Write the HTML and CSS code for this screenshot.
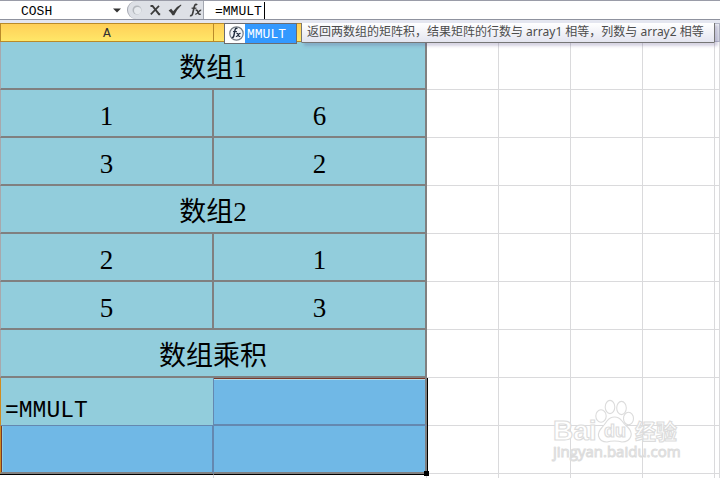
FILE: index.html
```html
<!DOCTYPE html>
<html lang="zh-CN">
<head>
<meta charset="utf-8">
<title>MMULT</title>
<link rel="stylesheet" href="styles.css">
</head>
<body>
<div class="formula-bar">
  <input class="name-box" type="text" value="COSH" aria-label="名称框">
  <button class="drop" type="button" aria-label="名称列表">
    <svg width="8" height="5" viewBox="0 0 8 5"><path d="M0 0.5h8L4 4.5z" fill="#333"/></svg>
  </button>
  <div class="tools">
    <svg class="knob" width="10" height="10" viewBox="0 0 10 10"><circle cx="5" cy="5" r="4.5" fill="#b4b8be"/><circle cx="5.6" cy="5.6" r="3.6" fill="#e6e9ed"/></svg>
    <button type="button" aria-label="取消">
      <svg width="12" height="12" viewBox="0 0 12 12"><path d="M1.5 2h2L10 10.2H11.2" fill="none" stroke="#3c3c3c" stroke-width="1.9"/><path d="M10 1.8L1.8 10.4" fill="none" stroke="#3c3c3c" stroke-width="1.7"/></svg>
    </button>
    <button type="button" aria-label="输入">
      <svg width="14" height="12" viewBox="0 0 14 12"><path d="M0.6 6.4L3.2 4.8L5.2 7.2Q8.2 2.4 13 0.4L13.4 1.2Q8.8 5.4 6.2 11.2H4.4Q3 8.4 0.6 6.4z" fill="#3c3c3c"/></svg>
    </button>
    <button type="button" aria-label="插入函数">
      <svg width="13" height="14" viewBox="0 0 13 14" fill="none" stroke="#3c3c3c"><path d="M8.2 1.9Q6.2 0.2 5.3 3.6L3.7 10.4Q3 13.4 1 12.4" stroke-width="1.7"/><path d="M2.6 5.2H7.4" stroke-width="1.3"/><path d="M6.6 7.4Q8 6.6 8.7 8.4L9.5 10.4Q10.2 11.8 11.6 10.8" stroke-width="1.6"/><path d="M12.2 7.3Q11 7 9.3 9.2Q7.6 11.5 6.2 11" stroke-width="1.3"/></svg>
    </button>
  </div>
  <div class="formula">
    <input class="formula-input" type="text" value="=MMULT" aria-label="编辑栏">
    <span class="caret"></span>
  </div>
</div>
<main class="sheet">
  <table>
    <colgroup><col class="col-a"><col class="col-b"><col class="col-n"><col class="col-n"><col class="col-n"><col class="col-n"><col></colgroup>
    <thead>
      <tr><th class="on">A</th><th class="on"></th><th></th><th></th><th></th><th></th><th></th></tr>
    </thead>
    <tbody>
      <tr><td class="f" colspan="2">数组1</td><td></td><td></td><td></td><td></td><td></td></tr>
      <tr><td class="f">1</td><td class="f">6</td><td></td><td></td><td></td><td></td><td></td></tr>
      <tr><td class="f">3</td><td class="f">2</td><td></td><td></td><td></td><td></td><td></td></tr>
      <tr><td class="f" colspan="2">数组2</td><td></td><td></td><td></td><td></td><td></td></tr>
      <tr><td class="f">2</td><td class="f">1</td><td></td><td></td><td></td><td></td><td></td></tr>
      <tr><td class="f">5</td><td class="f">3</td><td></td><td></td><td></td><td></td><td></td></tr>
      <tr><td class="f" colspan="2">数组乘积</td><td></td><td></td><td></td><td></td><td></td></tr>
      <tr><td class="f active">=MMULT</td><td class="f sel sel-top sel-right"></td><td></td><td></td><td></td><td></td><td></td></tr>
      <tr><td class="f sel sel-left"></td><td class="f sel sel-right sel-end"><span class="handle"></span></td><td></td><td></td><td></td><td></td><td></td></tr>
      <tr class="after"><td></td><td></td><td></td><td></td><td></td><td></td><td></td></tr>
    </tbody>
  </table>
  <div class="suggest">
    <svg width="20" height="19" viewBox="0 0 20 19"><circle cx="11.5" cy="9.5" r="6.7" fill="#f1f4f8" stroke="#747b84" stroke-width="1.2"/><g fill="none" stroke="#1f2b3d"><path d="M12.4 4.6Q10.6 3.4 10 6.2L8.9 11.5Q8.4 14 7 13.2" stroke-width="1.4"/><path d="M8 7.6h4" stroke-width="1"/><path d="M11.4 9.4Q12.7 9 13.2 10.8Q13.8 12.9 15.2 12.2M15.6 9.4Q14.4 9 13.3 10.8Q12.2 12.8 10.9 12.4" stroke-width="1.1"/></g></svg>
    <span class="suggest-name">MMULT</span>
  </div>
  <div class="tip">返回两数组的矩阵积，结果矩阵的行数与 array1 相等，列数与 array2 相等</div>
  <svg class="mark" width="140" height="68" viewBox="0 0 140 68" fill="#fff" stroke="#dcdcdc" stroke-width="1.1">
    <text class="mark-name" x="2" y="42" font-size="28">Bai</text>
    <text class="mark-cjk" x="84" y="41" font-size="21">经验</text>
    <ellipse cx="50" cy="18" rx="5.2" ry="6.2"/><ellipse cx="59" cy="9" rx="4.8" ry="6.6"/><ellipse cx="70.5" cy="10" rx="4.8" ry="6.6"/><ellipse cx="77.5" cy="20.5" rx="5" ry="6.2"/>
    <path d="M63.5 19Q68 19 71 23Q73 26 77 29.5Q81 33.500 80 38Q78 44 71 44Q68 43 63.500 43Q59 43 56 44Q49 44 47.500 38Q47 33.500 51 29.5Q54 26 56 23Q59 19 63.5 19z"/>
    <text class="mark-name" x="53" y="39" font-size="18">du</text>
    <text class="mark-url" x="2" y="59" font-size="15">jingyan.baidu.com</text>
  </svg>
</main>
</body>
</html>
```
FILE: styles.css
```css
* { box-sizing: border-box; }

body {
  margin: 0;
  height: 100vh;
  display: flex;
  flex-direction: column;
  overflow: hidden;
  background: #fff;
  color: #000;
  font-family: "Liberation Serif", "Noto Sans CJK SC", serif;
}

input, button {
  border: 0;
  padding: 0;
  margin: 0;
  background: none;
  outline: 0;
}

.formula-bar {
  flex: none;
  display: flex;
  align-items: stretch;
  height: 20px;
  border-top: 1px solid #9a9ca8;
  border-bottom: 1px solid #8f929e;
}

.name-box {
  width: 113px;
  padding: 2px 0 0 21px;
  font: 13px "Liberation Mono", monospace;
}

.drop {
  width: 14px;
  display: flex;
  align-items: center;
}

.tools {
  width: 77px;
  display: flex;
  align-items: center;
  gap: 7px;
  padding-left: 4px;
  background: #dde0e6;
  border: solid #a3a7b0;
  border-width: 0 1px;
  border-radius: 10px 0 0 10px;
}

.tools button { display: flex; }

.formula {
  flex: 1;
  display: flex;
  align-items: center;
  padding-left: 11px;
}

.formula-input {
  width: 49px;
  height: 18px;
  padding-top: 2px;
  font: 13px "Liberation Mono", monospace;
}

.caret {
  width: 1px;
  height: 17px;
  background: #000;
}

.sheet {
  position: relative;
  flex: 1;
  min-height: 0;
  overflow: hidden;
  border-top: 3px solid #e4e6f0;
}

table {
  width: 100%;
  table-layout: fixed;
  border-collapse: separate;
  border-spacing: 0;
}

.col-a { width: 214px; }
.col-b { width: 213px; }
.col-n { width: 72px; }

th {
  height: 19px;
  padding: 3px 0 0;
  font: 13px/14px "Liberation Mono", monospace;
  color: #333;
  background: linear-gradient(#eef0f5, #d8dbe6);
  border: solid #b4b7c6;
  border-width: 1px 1px 1px 0;
}

th.on {
  background: linear-gradient(#ffcf58, #ffe768);
  border-color: #b98a2a;
}

th:first-child { border-left: 1px solid #b98a2a; }

td {
  height: 48px;
  padding: 6px 0 0;
  text-align: center;
  font-size: 27px;
  line-height: 40px;
  border: solid #dadadc;
  border-width: 0 1px 1px 0;
}

td.f {
  position: relative;
  background: #92cddc;
  border: solid #808080;
  border-width: 0 2px 2px 0;
}

td.f:first-child { border-left: 1px solid #a8a8ac; }

td.active {
  padding: 19px 0 0 4px;
  text-align: left;
  font: 23px/28px "Liberation Mono", monospace;
  border-right: 1px solid #6488b0;
  border-bottom: 1px solid #6488b0;
}

td.active:first-child,
td.sel-left:first-child { border-left-color: #d08c20; }

td.sel {
  padding: 0;
  background: #70b8e6;
  border-color: #6488b0;
}

td.sel-left { box-shadow: inset 1px 0 #7a3828, inset 2px 0 #92cddc; border-bottom-color: #808080; }
td.sel-top { box-shadow: inset 0 1px #7a3828, inset 0 2px #b6dce8; }
td.sel-right { border-right-color: #808080; }
td.sel-end { border-bottom-color: #808080; }

td.sel-right::after {
  content: "";
  position: absolute;
  top: 0;
  bottom: -2px;
  right: -3px;
  width: 1px;
  background: #000;
}

.handle {
  position: absolute;
  right: -4px;
  bottom: -4px;
  width: 5px;
  height: 5px;
  background: #000;
}

.after td { padding: 0; }

.after td:nth-child(-n+2) { border-top: 1px solid #000; }

.suggest {
  position: absolute;
  left: 224px;
  top: 0;
  display: flex;
  height: 21px;
  border: 1px solid #6c6c70;
  background: #fff;
}

.suggest-name {
  padding: 1px 10px 0 2px;
  font: 13px/19px "Liberation Mono", monospace;
  color: #fff;
  background: #3399ff;
}

.tip {
  position: absolute;
  left: 301px;
  top: -1px;
  height: 21px;
  padding: 0 10px 0 5px;
  font: 12px/18px "Noto Sans", "Noto Sans CJK SC", sans-serif;
  white-space: nowrap;
  color: #4c4c4c;
  background: linear-gradient(#fff, #e4e5f0);
  border: 1px solid #767676;
  border-radius: 1px;
  box-shadow: 3px 3px 3px rgba(90, 80, 140, 0.25);
}

.mark {
  position: absolute;
  left: 551px;
  top: 375px;
}

.mark-name { font-family: "Liberation Sans", sans-serif; font-weight: 700; }
.mark-cjk { font-family: "Noto Sans CJK SC", sans-serif; font-weight: 700; }
.mark-url { font-family: "Open Sans", sans-serif; stroke-width: 1px; }
```
